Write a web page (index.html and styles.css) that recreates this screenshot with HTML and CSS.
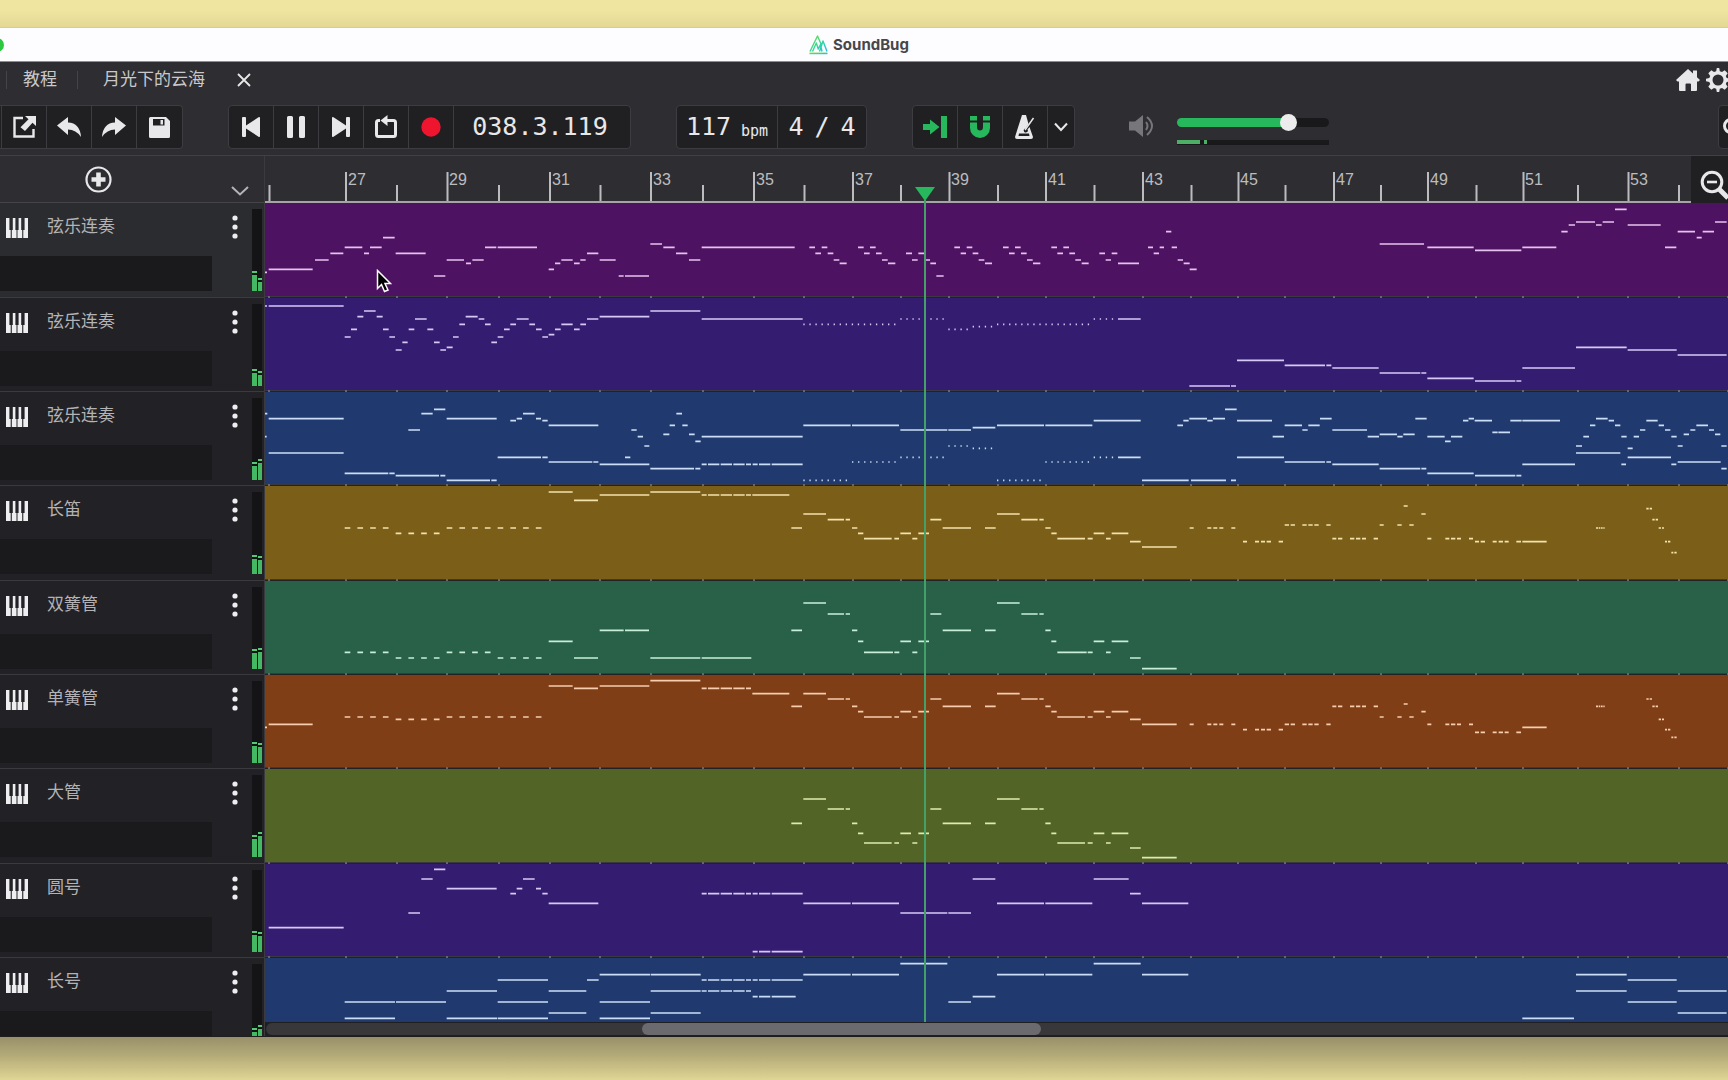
FILE: index.html
```html
<!DOCTYPE html>
<html lang="zh-CN">
<head>
<meta charset="utf-8">
<title>SoundBug</title>
<link rel="stylesheet" href="styles.css">
</head>
<body>
<svg class="defs" aria-hidden="true">
  <defs>
    <symbol id="piano" viewBox="0 0 22 20"><path fill="currentColor" d="M0 0h3.400v12h1.300v8H0zM6.800 0h2.600v12h1.100v8H5.800v-8h1zM12.600 0h2.600v12h1v8h-4.700v-8h1.100zM18.600 0H22v20h-4.700v-8h1.300z"/></symbol>
    <symbol id="more" viewBox="0 0 6 24"><g fill="currentColor"><circle cx="3" cy="3" r="2.600"/><circle cx="3" cy="12" r="2.600"/><circle cx="3" cy="21" r="2.600"/></g></symbol>
    <path id="bars" d="M4 0v2M81 0v2M132 0v2M182 0v2M234 0v2M285 0v2M335 0v2M386 0v2M438 0v2M489 0v2M539 0v2M588 0v2M636 0v2M684 0v2M733 0v2M781 0v2M829 0v2M878 0v2M926 0v2M973 0v2M1020 0v2M1069 0v2M1116 0v2M1163 0v2M1211 0v2M1258 0v2M1313 0v2M1363 0v2M1414 0v2M1463 0v2"/>
    <linearGradient id="logo" x1="0" y1="0" x2="1" y2="1"><stop offset="0" stop-color="#7be03c"/><stop offset=".55" stop-color="#2fd6a0"/><stop offset="1" stop-color="#2cb6e8"/></linearGradient>
  </defs>
</svg>

<main class="window">
  <header class="titlebar">
    <span class="light"></span>
    <svg class="logo" viewBox="0 0 19 20"><path fill="none" stroke="url(#logo)" stroke-width="1.400" stroke-linejoin="round" d="M1 16.500L8.500 1l4 9M3.500 16.500l3.800-8.500 2 6 2.200-4.500 1.500 7M10.500 16.500L14 6l4 10.500"/><rect x=".5" y="17.600" width="18" height="1.600" fill="url(#logo)"/></svg>
    <h1>SoundBug</h1>
  </header>

  <nav class="tabs">
    <a class="tab tab-guide" href="#guide">教程</a>
    <a class="tab tab-song" href="#song">月光下的云海</a>
    <button class="icon-btn close" aria-label="关闭"><svg width="14" height="14" viewBox="0 0 14 14"><path d="M1 1l12 12M13 1L1 13" stroke="currentColor" stroke-width="1.800"/></svg></button>
    <div class="tab-tools">
      <button class="icon-btn" aria-label="主页"><svg width="24" height="22" viewBox="0 0 24 22"><path fill="currentColor" d="M12 0l5 4.500V1.500h4v6.700l3 2.800-1.500 1.500H21V21q0 1-1 1h-5v-6.500q0-1-1-1h-3.500q-1 0-1 1V22H4q-1 0-1-1v-8.500H1.500L0 11z"/></svg></button>
      <button class="icon-btn" aria-label="设置"><svg width="26" height="24" viewBox="0 0 26 24"><path fill="currentColor" fill-rule="evenodd" d="M10.800 0h2.400l.6 3.200 2.200.9L18.700 2.200l3 3-1.900 2.700.9 2.200 3.300.6v2.600l-3.300.6-.9 2.200 1.900 2.700-3 3-2.700-1.900-2.200.9-.6 3.200h-2.400l-.6-3.200-2.200-.9-2.700 1.900-3-3 1.900-2.700-.9-2.200L0 13.300v-2.600l3.300-.6.900-2.200-1.900-2.700 3-3L8 4.100l2.200-.9zM12 6.500a5.500 5.500 0 1 0 0 11 5.500 5.500 0 0 0 0-11z"/></svg></button>
    </div>
  </nav>

  <section class="toolbar" aria-label="工具栏">
    <div class="group group-file">
      <button class="cell" aria-label="导出"><svg width="23" height="22" viewBox="0 0 23 22"><path fill="none" stroke="currentColor" stroke-width="2.400" d="M10 2H1.500v18.500h19V13"/><path fill="currentColor" d="M12 0h11v10l-3.500-3.300-7.500 8.300-4.500-3.800 8-8z"/></svg></button>
      <button class="cell" aria-label="撤销"><svg width="24" height="20" viewBox="0 0 24 20"><path fill="currentColor" d="M0 8.500L11 0v5.500Q23 6 24 20 19 12.500 11 12.500V18z"/></svg></button>
      <button class="cell" aria-label="重做"><svg width="24" height="20" viewBox="0 0 24 20"><path fill="currentColor" d="M24 8.500L13 0v5.500Q1 6 0 20q5-7.500 13-7.500V18z"/></svg></button>
      <button class="cell" aria-label="保存"><svg width="21" height="21" viewBox="0 0 21 21"><path fill="currentColor" fill-rule="evenodd" d="M1.500 0H17l4 4v15.500q0 1.500-1.500 1.500h-18Q0 21 0 19.500v-18Q0 0 1.500 0zM4 2v6.500h11.500V2zM11.500 3H14v4.500h-2.500z"/></svg></button>
    </div>

    <div class="group">
      <button class="cell" aria-label="回到开头"><svg width="18" height="20" viewBox="0 0 18 20"><path fill="currentColor" d="M0 1q0-1 1-1h2q1 0 1 1v7.500L16.500.3Q18-.4 18 1v18q0 1.400-1.500.7L4 11.500V19q0 1-1 1H1q-1 0-1-1z"/></svg></button>
      <button class="cell" aria-label="暂停"><svg width="18" height="22" viewBox="0 0 18 22"><path fill="currentColor" d="M1.500 0h3Q6 0 6 1.500v19Q6 22 4.500 22h-3Q0 22 0 20.500v-19Q0 0 1.500 0zM13.500 0h3Q18 0 18 1.500v19q0 1.500-1.500 1.500h-3q-1.500 0-1.500-1.500v-19Q12 0 13.500 0z"/></svg></button>
      <button class="cell" aria-label="跳到结尾"><svg width="18" height="20" viewBox="0 0 18 20"><path fill="currentColor" d="M18 1q0-1-1-1h-2q-1 0-1 1v7.500L1.500.3Q0-.4 0 1v18q0 1.400 1.500.7L14 11.500V19q0 1 1 1h2q1 0 1-1z"/></svg></button>
      <button class="cell" aria-label="循环"><svg width="24" height="24" viewBox="0 0 24 24"><path fill="none" stroke="currentColor" stroke-width="3" d="M6 5.500H4.500Q2.500 5.500 2.500 7.500v12q0 2 2 2h15q2 0 2-2v-12q0-2-2-2H13"/><path fill="currentColor" d="M6.500 5.500L13.500 0v11z"/></svg></button>
      <button class="cell" aria-label="录音"><svg width="20" height="20" viewBox="0 0 20 20"><circle cx="10" cy="10" r="9.700" fill="#f0152f"/></svg></button>
      <output class="readout time">038.3.119</output>
    </div>

    <div class="group">
      <output class="readout tempo">117<small>bpm</small></output>
      <output class="readout meter-sign"><span>4</span> <span>/</span> <span>4</span></output>
    </div>

    <div class="group">
      <button class="cell on" aria-label="跟随播放"><svg width="24" height="22" viewBox="0 0 24 22"><path fill="currentColor" d="M18 0h6v22h-6zM0 8h7V3.500L16.500 11 7 18.500V14H0z"/></svg></button>
      <button class="cell on" aria-label="吸附"><svg width="20" height="22" viewBox="0 0 20 22"><path fill="currentColor" d="M0 0h7v4.500H0zM13 0h7v4.500h-7zM0 6.500h7V11a3 3.500 0 0 0 6 0V6.500h7V12a10 10 0 0 1-20 0z"/></svg></button>
      <button class="cell" aria-label="节拍器"><svg width="20" height="24" viewBox="0 0 20 24"><path fill="currentColor" fill-rule="evenodd" d="M7 0h4l2.500 9-3 4.500a2 2 0 1 0 2 1l2-2.500L18 22q0 2-2 2H2q-2 0-2-2zM4 18.500L3.500 21h11L14 18.500z"/><path stroke="currentColor" stroke-width="1.500" d="M10 15L18.500 3"/></svg></button>
      <button class="cell cell-slim" aria-label="节拍器选项"><svg width="14" height="10" viewBox="0 0 14 10"><path fill="none" stroke="currentColor" stroke-width="2" d="M1 1.500l6 6.500 6-6.500"/></svg></button>
    </div>

    <div class="volume">
      <button class="icon-btn mute" aria-label="静音"><svg width="25" height="22" viewBox="0 0 25 22"><path fill="currentColor" d="M0 6.500h6L14 0v22l-8-6.500H0z"/><path fill="none" stroke="currentColor" stroke-width="2" d="M17 7q3 4 0 8M18 2q10 9 0 18"/></svg></button>
      <div class="levels">
        <input class="slider" type="range" min="0" max="100" value="76" aria-label="音量">
        <div class="level"><span class="level-now"></span><span class="level-peak"></span></div>
      </div>
    </div>

    <button class="cell search" aria-label="搜索"><svg width="18" height="20" viewBox="0 0 18 20"><circle cx="8" cy="9" r="6.500" fill="none" stroke="currentColor" stroke-width="3"/></svg></button>
  </section>

  <section class="arranger" aria-label="编曲">
    <div class="ruler-row">
      <div class="corner">
        <button class="icon-btn add" aria-label="添加音轨"><svg width="27" height="27" viewBox="0 0 27 27"><circle cx="13.500" cy="13.500" r="12" fill="none" stroke="currentColor" stroke-width="2.200"/><path stroke="currentColor" stroke-width="4.600" d="M13.500 6.500v14M6.500 13.500h14"/></svg></button>
        <button class="icon-btn fold" aria-label="展开"><svg width="18" height="10" viewBox="0 0 18 10"><path fill="none" stroke="currentColor" stroke-width="2" d="M1 1l8 7.500L17 1"/></svg></button>
      </div>
      <div class="ruler">
        <svg width="1464" height="47">
          <path class="tick" d="M4.500 29v18M132 29v18M234 29v18M335.500 29v18M438 29v18M539.500 29v18M636 29v18M733 29v18M829.500 29v18M926.500 29v18M1020.500 29v18M1116 29v18M1211.500 29v18M1313 29v18M1414 29v18"/>
          <path class="tick" d="M81 16v31M182.500 16v31M285 16v31M386 16v31M489 16v31M588 16v31M684.500 16v31M781 16v31M878 16v31M973.500 16v31M1069 16v31M1163 16v31M1258.500 16v31M1363.500 16v31"/>
          <g class="bar-numbers"><text x="83" y="29">27</text><text x="184" y="29">29</text><text x="287" y="29">31</text><text x="388" y="29">33</text><text x="491" y="29">35</text><text x="590" y="29">37</text><text x="686" y="29">39</text><text x="783" y="29">41</text><text x="880" y="29">43</text><text x="975" y="29">45</text><text x="1071" y="29">47</text><text x="1165" y="29">49</text><text x="1260" y="29">51</text><text x="1365" y="29">53</text></g>
        </svg>
      </div>
      <button class="zoom-out" aria-label="缩小"><svg width="32" height="30" viewBox="0 0 32 30"><circle cx="12" cy="12" r="9.800" fill="none" stroke="currentColor" stroke-width="3"/><path stroke="currentColor" stroke-width="2.600" d="M7 12h10"/><path stroke="currentColor" stroke-width="5" d="M19 19l9 9"/></svg></button>
    </div>

    <div class="tracks">
      <article class="track magenta selected">
        <div class="head"><svg class="piano"><use href="#piano"/></svg><h2>弦乐连奏</h2><button class="icon-btn more" aria-label="更多"><svg width="6" height="24"><use href="#more"/></svg></button><div class="slot"></div><div class="vu"><i style="height:20px"></i><i style="height:13px"></i></div></div>
        <div class="lane"><div class="clip"><svg class="notes" viewBox="0 0 4392 276">
          <path transform="translate(-15 -9)" d="M14 217H21M26 208H158M165 180H206M211 160H250M254 142H307M312 160H327M330 142H365M369 113H404M407 160H497M522 228H556M560 180H612M618 190H633M637 180H671M675 142H709M713 142H831M866 208H882M885 190H901M904 180H938M942 190H959M961 180H977M981 160H1015M1019 180H1067M1076 228H1091M1095 228H1167M1171 132H1206M1210 142H1244M1248 160H1282M1287 180H1321M1325 142H1604"/>
          <path transform="translate(1425 -9)" d="M208 142H225M226 160H243M245 142H262M263 160H280M281 180H298M299 190H320M354 142H371M372 160H389M390 142H407M408 160H425M426 180H443M444 190H466M498 160H516M516 180H533M535 160H552M556 180H570M571 190H588M589 228H611M643 142H660M662 160H678M680 142H697M698 160H715M716 180H733M735 190H756M789 142H806M807 160H824M825 142H842M843 160H860M861 180H878M879 190H901M934 142H951M952 160H969M970 142H987M988 160H1005M1006 180H1023M1025 190H1046M1078 160H1095M1097 180H1113M1115 160H1132M1134 190H1197M1224 142H1239M1241 160H1257M1259 142H1272M1278 95H1294M1295 142H1311M1313 180H1329M1331 190H1349M1349 208H1370"/>
          <path transform="translate(2889 -9)" d="M455 132H588M598 142H737M741 151H880M883 142H985M1000 95H1019M1022 75H1041M1044 66H1101M1104 75H1121M1124 66H1158M1161 28H1196M1199 75H1298M1311 142H1345M1349 95H1401M1406 113H1421M1424 95H1458M1461 66H1496"/>
        </svg></div><svg class="bar-ticks"><use href="#bars"/></svg></div>
      </article>

      <article class="track violet">
        <div class="head"><svg class="piano"><use href="#piano"/></svg><h2>弦乐连奏</h2><button class="icon-btn more" aria-label="更多"><svg width="6" height="24"><use href="#more"/></svg></button><div class="slot"></div><div class="vu"><i style="height:17px"></i><i style="height:15px"></i></div></div>
        <div class="lane"><div class="clip"><svg class="notes" viewBox="0 0 4392 276">
          <path transform="translate(-15 -294)" d="M14 318H21M26 318H251M254 411H272M273 388H291M292 350H310M312 333H347M350 350H368M369 388H386M388 411H405M407 450H425M427 427H443M446 388H463M465 357H500M502 388H520M522 427H539M541 450H558M560 442H578M579 411H596M598 373H615M617 350H653M656 357H673M675 373H692M694 427H711M713 411H730M732 388H749M751 373H768M770 357H806M808 373H825M828 388H845M847 411H864M866 404H883M885 388H902M904 373H938M942 388H959M961 373H978M981 357H1015M1019 350H1168M1171 333H1321M1325 357H1628"/>
          <path class="staccato" transform="translate(1425 -294)" d="M190 373H470M481 357H545M571 357H613M625 388H686M698 380H758M771 373H1050M1061 357H1120"/>
          <path transform="translate(1425 -294)" d="M1134 357H1202M1348 558H1470M1473 558H1488"/>
          <path transform="translate(2889 -294)" d="M27 481H168M170 496H291M295 496H310M313 504H452M455 519H577M580 519H595M598 535H737M741 543H862M865 543H880M883 504H1041M1044 442H1196M1199 450H1346M1349 465H1496"/>
        </svg></div><svg class="bar-ticks"><use href="#bars"/></svg></div>
      </article>

      <article class="track blue">
        <div class="head"><svg class="piano"><use href="#piano"/></svg><h2>弦乐连奏</h2><button class="icon-btn more" aria-label="更多"><svg width="6" height="24"><use href="#more"/></svg></button><div class="slot"></div><div class="vu"><i style="height:18px"></i><i style="height:21px"></i></div></div>
        <div class="lane"><div class="clip"><svg class="notes" viewBox="0 0 4392 276">
          <path transform="translate(-15 -576)" d="M14 641H22M26 656H251M14 710H20M26 759H251M254 820H385M388 820H404M407 827H537M541 827H556M445 690H480M484 641H518M522 628H556M560 656H710M560 841H690M694 841H710M713 772H843M847 772H863M751 662H768M770 656H786M789 641H824M828 656H843M847 662H863M866 676H1015M866 786H997M1000 786H1015M1019 793H1168M1095 772H1111M1114 690H1130M1133 710H1149M1153 738H1168M1210 703H1228M1229 676H1245M1249 641H1266M1267 676H1283M1287 703H1304M1306 724H1322M1171 806H1302M1306 806H1321M1325 710H1628M1325 793H1340M1344 793H1378M1382 793H1416M1420 793H1454"/>
          <path transform="translate(1425 -576)" d="M18 793H33M38 793H53M57 793H91M95 793H188M190 676H332M336 676H477M481 690H622M625 690H693M698 683H766M771 676H912M916 676H1057M1061 662H1202M1134 772H1202M1206 841H1346M1353 841H1458M1473 841H1488M1312 676H1329M1330 662H1346M1348 656H1401M1402 662H1418M1419 656H1455M1455 628H1490"/>
          <path class="staccato" transform="translate(1425 -576)" d="M190 841H325M336 786H468M481 772H545M571 772H613M625 738H686M698 745H758M771 841H905M916 786H1050M1061 772H1120"/>
          <path transform="translate(2889 -576)" d="M27 662H132M134 710H168M170 676H222M223 690H239M241 676H275M276 656H311M313 690H417M419 710H453M455 703H507M508 710H524M526 703H560M562 656H596M598 710H650M651 724H668M669 710H703M705 662H721M722 656H738M740 662H792M793 697H809M811 697H846M847 662H881M883 662H996M27 772H168M170 786H291M295 786H309M313 793H452M455 806H577M580 806H595M598 820H737M741 827H862M865 827H880M883 793H1041M1044 738H1062M1066 710H1083M1086 676H1102M1104 656H1139M1142 662H1158M1161 676H1177M1180 710H1196M1044 759H1177M1180 793H1194M1199 745H1214M1217 710H1233M1236 690H1252M1255 662H1289M1292 676H1308M1311 690H1327M1330 710H1346M1199 772H1329M1330 793H1345M1349 738H1364M1367 703H1383M1387 690H1402M1405 676H1440M1443 690H1458M1461 703H1477M1480 738H1496M1349 786H1478M1480 806H1496"/>
        </svg></div><svg class="bar-ticks"><use href="#bars"/></svg></div>
      </article>

      <article class="track gold">
        <div class="head"><svg class="piano"><use href="#piano"/></svg><h2>长笛</h2><button class="icon-btn more" aria-label="更多"><svg width="6" height="24"><use href="#more"/></svg></button><div class="slot"></div><div class="vu"><i style="height:19px"></i><i style="height:18px"></i></div></div>
        <div class="lane"><div class="clip"><svg class="notes" viewBox="0 0 4392 276">
          <path class="quavers" transform="translate(-15 -6)" d="M254 132H387M407 148H541M560 132H847"/>
          <path transform="translate(-15 -6)" d="M866 24H938M942 49H1014M1019 33H1168M1171 24H1321M1325 33H1340M1344 33H1378M1382 33H1416M1420 33H1454"/>
          <path transform="translate(1425 -6)" d="M18 33H33M37 33H148M154 132H186M190 90H258M263 107H312M317 107H330M336 132H352M354 148H370M372 164H455M463 164H477M481 148H513M517 164H532M535 148H567M571 107H604M608 132H693M735 132H767M771 90H839M844 107H893M898 107H911M916 132H932M934 148H950M952 164H1035M1043 164H1058M1061 148H1093M1098 164H1112M1115 148H1165M1170 173H1202M1206 189H1310M1349 132H1361M1402 132H1414M1420 132H1432M1438 132H1450M1474 132H1486"/>
          <path transform="translate(2889 -6)" d="M45 173H57M81 173H93M99 173H111M116 173H129M152 173H165M170 123H183M188 123H201M223 123H236M241 123H254M259 123H272M295 123H308M313 164H325M330 164H343M366 164H379M384 164H397M402 164H414M437 164H450M455 123H467M508 123H521M527 66H539M544 123H557M580 90H593M598 164H610M652 164H664M669 164H682M687 164H699M723 164H735M741 173H753M758 173H771M794 173H806M812 173H825M830 173H842M865 173H879M883 173H956M1104 132H1110M1112 132H1117M1119 132H1124M1126 132H1130M1255 74H1262M1265 74H1272M1273 107H1280M1283 107H1290M1292 132H1299M1302 132H1308M1311 173H1317M1320 173H1327M1330 206H1336M1339 206H1346"/>
        </svg></div><svg class="bar-ticks"><use href="#bars"/></svg></div>
      </article>

      <article class="track green">
        <div class="head"><svg class="piano"><use href="#piano"/></svg><h2>双簧管</h2><button class="icon-btn more" aria-label="更多"><svg width="6" height="24"><use href="#more"/></svg></button><div class="slot"></div><div class="vu"><i style="height:20px"></i><i style="height:21px"></i></div></div>
        <div class="lane"><div class="clip"><svg class="notes" viewBox="0 0 4392 276">
          <path class="quavers" transform="translate(-15 -291)" d="M254 505H387M407 522H539M560 505H692M713 522H846"/>
          <path transform="translate(-15 -291)" d="M866 472H938M942 522H1014M1019 439H1091M1095 439H1167M1171 522H1321M1325 522H1474"/>
          <path transform="translate(1425 -291)" d="M154 439H186M190 357H258M263 390H312M317 390H330M336 439H352M354 472H370M372 505H459M463 505H478M481 472H513M517 505H532M535 472H567M571 390H604M608 439H693M735 439H767M771 357H839M844 390H893M898 390H911M916 439H932M934 472H949M952 505H1040M1043 505H1058M1061 472H1093M1098 505H1112M1115 472H1165M1170 522H1202M1206 554H1310"/>
        </svg></div><svg class="bar-ticks"><use href="#bars"/></svg></div>
      </article>

      <article class="track rust">
        <div class="head"><svg class="piano"><use href="#piano"/></svg><h2>单簧管</h2><button class="icon-btn more" aria-label="更多"><svg width="6" height="24"><use href="#more"/></svg></button><div class="slot"></div><div class="vu"><i style="height:21px"></i><i style="height:20px"></i></div></div>
        <div class="lane"><div class="clip"><svg class="notes" viewBox="0 0 4392 276">
          <path class="quavers" transform="translate(-15 -573)" d="M254 699H387M407 706H541M560 699H847"/>
          <path transform="translate(-15 -573)" d="M14 730H21M26 721H158M866 606H938M942 613H1014M1019 606H1168M1171 590H1321M1325 613H1340M1344 613H1378M1382 613H1416M1420 613H1454"/>
          <path transform="translate(1425 -573)" d="M18 613H33M37 629H148M154 667H186M190 629H258M263 645H312M317 645H330M336 667H352M354 683H370M372 699H455M463 699H477M481 683H513M517 699H532M535 683H567M571 645H604M608 667H693M735 667H767M771 629H839M844 645H893M898 645H911M916 667H932M934 683H950M952 699H1035M1043 699H1058M1061 683H1093M1098 699H1112M1115 683H1165M1170 706H1202M1206 721H1310M1349 721H1361M1402 721H1414M1420 721H1432M1438 721H1450M1474 721H1486"/>
          <path transform="translate(2889 -573)" d="M45 737H57M81 737H93M99 737H111M116 737H129M152 737H165M170 721H183M188 721H201M223 721H236M241 721H254M259 721H272M295 721H308M313 667H325M330 667H343M366 667H379M384 667H397M402 667H414M437 667H450M455 699H467M508 699H521M527 660H539M544 699H557M580 683H593M598 721H610M652 721H664M669 721H682M687 721H699M723 721H735M741 745H753M758 745H771M794 745H806M812 745H825M830 745H842M865 745H879M883 730H956M1104 667H1110M1112 667H1117M1119 667H1124M1126 667H1130M1255 645H1262M1265 645H1272M1273 667H1280M1283 667H1290M1292 706H1299M1302 706H1308M1311 737H1317M1320 737H1327M1330 760H1336M1339 760H1346"/>
        </svg></div><svg class="bar-ticks"><use href="#bars"/></svg></div>
      </article>

      <article class="track olive">
        <div class="head"><svg class="piano"><use href="#piano"/></svg><h2>大管</h2><button class="icon-btn more" aria-label="更多"><svg width="6" height="24"><use href="#more"/></svg></button><div class="slot"></div><div class="vu"><i style="height:22px"></i><i style="height:25px"></i></div></div>
        <div class="lane"><div class="clip"><svg class="notes" viewBox="0 0 4392 276">
          <path transform="translate(1425 -15)" d="M154 178H186M190 105H258M263 135H312M317 135H330M336 178H352M354 208H370M372 237H455M463 237H477M481 208H513M517 237H532M535 208H567M571 135H604M608 178H693M735 178H767M771 105H839M844 135H893M898 135H911M916 178H932M934 208H949M952 237H1035M1043 237H1058M1061 208H1093M1098 237H1112M1115 208H1165M1170 252H1202M1206 281H1310"/>
        </svg></div><svg class="bar-ticks"><use href="#bars"/></svg></div>
      </article>

      <article class="track violet">
        <div class="head"><svg class="piano"><use href="#piano"/></svg><h2>圆号</h2><button class="icon-btn more" aria-label="更多"><svg width="6" height="24"><use href="#more"/></svg></button><div class="slot"></div><div class="vu"><i style="height:21px"></i><i style="height:20px"></i></div></div>
        <div class="lane"><div class="clip"><svg class="notes" viewBox="0 0 4392 276">
          <path transform="translate(-15 -300)" d="M26 491H251M445 447H480M484 345H518M522 316H556M560 374H710M751 389H768M770 374H787M789 345H824M828 374H843M847 389H863M866 418H1015M1325 389H1340M1344 389H1378M1382 389H1416M1420 389H1454"/>
          <path transform="translate(1425 -300)" d="M18 389H33M38 389H53M57 389H91M95 389H188M38 563H53M57 563H91M95 563H188M190 418H332M336 418H477M481 447H622M625 447H693M698 345H766M771 418H912M916 418H1057M1061 345H1166M1170 389H1202M1206 418H1345"/>
        </svg></div><svg class="bar-ticks"><use href="#bars"/></svg></div>
      </article>

      <article class="track blue">
        <div class="head"><svg class="piano"><use href="#piano"/></svg><h2>长号</h2><button class="icon-btn more" aria-label="更多"><svg width="6" height="24"><use href="#more"/></svg></button><div class="slot"></div><div class="vu"><i style="height:18px"></i><i style="height:21px"></i></div></div>
        <div class="lane"><div class="clip"><svg class="notes" viewBox="0 0 4392 276">
          <path transform="translate(-15 -582)" d="M254 714H405M408 714H558M254 763H405M560 681H711M560 763H711M713 648H864M713 714H864M713 763H864M866 681H979M866 747H979M981 648H1016M1019 632H1170M1019 714H1170M1019 763H1170M1172 632H1322M1172 681H1322M1172 747H1322M1325 648H1340M1344 648H1378M1382 648H1416M1420 648H1454M1325 681H1340M1344 681H1378M1382 681H1416M1420 681H1454"/>
          <path transform="translate(1425 -582)" d="M18 648H33M38 648H53M57 648H91M95 648H188M18 681H33M38 698H53M57 698H91M95 698H167M190 632H332M336 632H477M481 599H622M625 714H693M698 698H766M771 632H912M916 632H1057M1061 599H1202M1206 632H1345"/>
          <path transform="translate(2889 -582)" d="M883 763H1038M1044 632H1196M1044 681H1196M1199 648H1346M1199 714H1346M1349 681H1496M1349 747H1496"/>
        </svg></div><svg class="bar-ticks"><use href="#bars"/></svg></div>
      </article>
    </div>

    <svg class="playhead-flag" width="20" height="14" viewBox="0 0 20 14"><path fill="#27b85d" d="M0 0h20L10 14z"/></svg>
    <div class="playhead"></div>
    <div class="hscroll"><div class="hscroll-track"><div class="hscroll-thumb"></div></div></div>
  </section>
</main>

<svg class="pointer" width="16" height="25" viewBox="0 0 16 25"><path d="M1.500 1.500v18l4-4 3 7 3.500-1.500-3-6.500h5.500z" fill="#000" stroke="#fff" stroke-width="1.500"/></svg>
</body>
</html>
```
FILE: styles.css
```css
* { box-sizing: border-box; }

body {
  margin: 0;
  height: 100vh;
  padding: 28px 0 43px;
  display: flex;
  flex-direction: column;
  overflow: hidden;
  position: relative;
  background: linear-gradient(#efe5a1 0, #efe5a1 10px, #e3d995 27px, #cdbc96 28px, #98906a calc(100% - 43px), #b5ab79 calc(100% - 24px), #dfd594 100%);
  font-family: "Liberation Sans", "Noto Sans CJK SC", sans-serif;
  color: #e8e8ea;
}

h1, h2 { margin: 0; font-weight: 400; }
button { font: inherit; color: inherit; background: none; border: 0; padding: 0; }
svg { display: block; flex: none; }
.defs { position: absolute; width: 0; height: 0; }

.window {
  flex: 1;
  min-height: 0;
  display: flex;
  flex-direction: column;
  background: #2e2d31;
  border-bottom: 1px solid #1f1d1e;
}

/* Title bar */
.titlebar {
  flex: none;
  height: 34px;
  display: flex;
  align-items: center;
  justify-content: center;
  gap: 5px;
  padding-right: 10px;
  position: relative;
  background: #fdfcfe;
  border-bottom: 1px solid #8d908e;
}
.titlebar h1 { font: 700 15px/20px Inter, sans-serif; color: #47464a; }
.logo { width: 19px; height: 20px; }
.light {
  position: absolute;
  left: -10px;
  top: 10px;
  width: 14px;
  height: 14px;
  border-radius: 50%;
  background: #2bc840;
}

/* Tabs */
.tabs {
  flex: none;
  height: 34px;
  display: flex;
  align-items: center;
  padding: 1px 0 0 6px;
  overflow: hidden;
}
.tab {
  font-size: 17px;
  line-height: 18px;
  color: #c9c9cc;
  text-decoration: none;
  border-left: 1px solid #454448;
}
.tab-guide { padding: 0 20px 0 16px; }
.tab-song { padding-left: 25px; }
.close { margin-left: 32px; }
.tab-tools { margin-left: auto; margin-right: -4px; display: flex; align-items: center; gap: 6px; }

/* Toolbar */
.toolbar {
  flex: none;
  height: 59px;
  padding: 9px 0 6px;
  display: flex;
  align-items: flex-start;
  gap: 45px;
  overflow: hidden;
}
.group {
  flex: none;
  height: 44px;
  display: flex;
  background: #202023;
  border: 1px solid #3d3c41;
  border-radius: 4px;
}
.group-file { padding-left: 2px; border-left: 0; border-radius: 0 4px 4px 0; }
.cell {
  width: 45px;
  display: flex;
  align-items: center;
  justify-content: center;
  border-right: 1px solid #3d3c41;
}
.group > :last-child { border-right: 0; }
.group-file .cell:first-child { box-shadow: -1px 0 #3d3c41; }
.cell-slim { width: 26px; }
.on { color: #27b85d; }
.readout {
  display: flex;
  align-items: center;
  justify-content: center;
  font: 25px/42px "DejaVu Sans Mono", monospace;
}
.time { width: 176px; padding-right: 4px; }
.tempo { width: 101px; gap: 10px; border-right: 1px solid #3d3c41; }
.tempo small { font-size: 15px; padding-top: 8px; }
.meter-sign { width: 88px; gap: 11px; }

.volume { display: flex; gap: 23px; margin-left: 9px; padding-top: 9px; }
.mute { color: #77767a; height: 24px; }
.levels { width: 152px; display: flex; flex-direction: column; gap: 9px; }
.slider {
  appearance: none;
  width: 152px;
  height: 17px;
  margin: 0;
  background: none;
}
.slider::-webkit-slider-runnable-track {
  height: 9px;
  border-radius: 5px;
  background: linear-gradient(90deg, #27b85d 74%, #19191c 74%);
}
.slider::-webkit-slider-thumb {
  appearance: none;
  width: 17px;
  height: 17px;
  margin-top: -4px;
  border-radius: 50%;
  background: #ececec;
}
.level { height: 5px; display: flex; gap: 4px; background: #19191c; }
.level-now { width: 23px; height: 4px; background: #4fae66; }
.level-peak { width: 3px; height: 4px; background: #4fae66; }
.search {
  height: 44px;
  flex: none;
  margin: 0 -35px 0 auto;
  padding-left: 4px;
  justify-content: flex-start;
  background: #202023;
  border: 1px solid #3d3c41;
  border-radius: 4px;
}

/* Ruler */
.arranger {
  flex: 1;
  min-height: 0;
  display: flex;
  flex-direction: column;
  position: relative;
  border-top: 1px solid #414045;
}
.ruler-row { flex: none; height: 47px; display: flex; }
.corner {
  flex: none;
  width: 265px;
  position: relative;
  display: flex;
  border-right: 1px solid #3b3a3f;
  border-bottom: 1px solid #454449;
}
.add { margin: 10px 0 0 85px; height: 27px; }
.fold { margin: 30px 0 0 119px; height: 10px; color: #b5b5b8; }
.ruler { flex: 1; min-width: 0; overflow: hidden; border-bottom: 2px solid #a5a5a8; }
.tick { fill: none; stroke: #bcbcbf; stroke-width: 2; }
.bar-numbers { font-size: 16px; fill: #bcbcbf; }
.zoom-out {
  flex: none;
  width: 37px;
  padding: 10px 0 0 9px;
  overflow: hidden;
  background: #202023;
}

/* Tracks */
.tracks { flex: 1; min-height: 0; overflow: hidden; background: #222125; }
.track { height: 94px; display: flex; }
.track:nth-child(3n + 1) { height: 95px; }
.head {
  flex: none;
  width: 265px;
  display: grid;
  grid-template: 48px 35px / 29px 183px 40px 10px;
  row-gap: 5px;
  border-right: 1px solid #3b3a3f;
  border-bottom: 1px solid #3b3a3f;
  color: #eeeef0;
}
.selected .head { background: #2b2c2f; }
.piano { width: 22px; height: 20px; margin: 15px 0 0 6px; }
.head h2 { padding: 12px 0 0 18px; font-size: 17px; line-height: 24px; color: #b3b3b6; }
.more { grid-column: 3; margin: 12px 0 0 20px; width: 6px; height: 24px; }
.slot { grid-row: 2; grid-column: 1 / 3; background: #1a191c; }
.vu {
  grid-row: 1 / 3;
  grid-column: 4;
  margin-top: 6px;
  display: flex;
  align-items: flex-end;
  gap: 1px;
  background: #141416;
}
.vu i { flex: 1; background: linear-gradient(#55c877 0 2px, #141416 2px 4px, #45b863 4px); }

.lane { flex: 1; min-width: 0; display: flex; flex-direction: column; overflow: hidden; }
.clip { flex: 1; min-height: 0; }
.notes { width: 1464px; height: 92px; fill: none; stroke-width: 5; stroke: currentColor; }
.staccato { stroke-dasharray: 4 14.15; }
.quavers { stroke-dasharray: 17 21.2; }
.bar-ticks {
  width: 100%;
  height: 2px;
  stroke: #67666c;
  stroke-width: 2;
  background: linear-gradient(#3a393f 1px, #212126 1px);
}

.magenta .clip { background: #4e1262; color: #e6c2ee; }
.violet .clip { background: #341c71; color: #d5c9f6; }
.blue .clip { background: #203a6f; color: #cbdef6; }
.gold .clip { background: #7b5f18; color: #f3e2ac; }
.green .clip { background: #286048; color: #c8eed8; }
.rust .clip { background: #7f3e15; color: #f6cdae; }
.olive .clip { background: #526526; color: #dfeab2; }

/* Overlays */
.playhead {
  position: absolute;
  left: 924px;
  top: 44px;
  bottom: 14px;
  width: 2px;
  background: #43a068;
}
.playhead-flag { position: absolute; left: 915px; top: 31px; }
.hscroll {
  position: absolute;
  left: 265px;
  right: 0;
  bottom: 0;
  height: 14px;
  padding: 1px 0 0 1px;
  background: #1f1f22;
}
.hscroll-track { height: 12px; background: #38383b; border-radius: 6px 0 0 6px; }
.hscroll-thumb { width: 27.3%; height: 12px; margin-left: 25.7%; border-radius: 6px; background: #6b6a6f; }
.pointer { position: absolute; left: 376px; top: 269px; }
```
